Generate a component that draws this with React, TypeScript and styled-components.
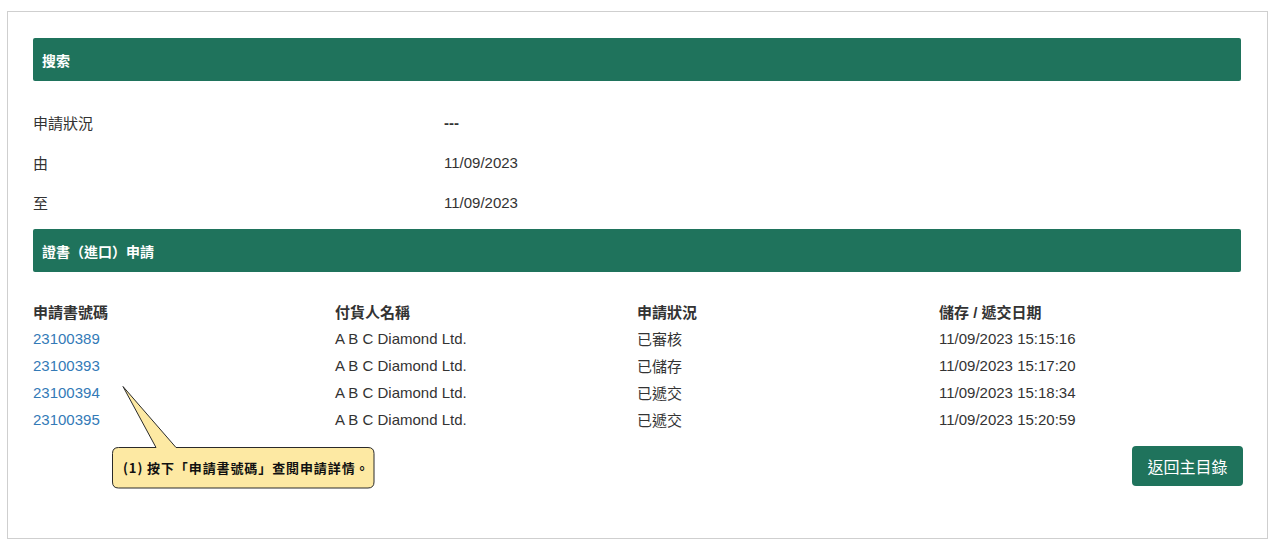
import styled, { createGlobalStyle } from "styled-components";

const GlobalStyle = createGlobalStyle`
  body {
    margin: 0;
    background: #ffffff;
    font-family: "Liberation Sans", Arial, "Noto Sans CJK TC", sans-serif;
    font-size: 15px;
    color: #333333;
  }
`;

const Frame = styled.div`
  position: relative;
  box-sizing: border-box;
  width: 1261px;
  margin: 11px 0 0 7px;
  padding: 26px 26px 50px 25px;
  border: 1px solid #cfcfcf;
  height: 528px;
`;

const SectionBar = styled.div`
  box-sizing: border-box;
  height: 43px;
  background: #1f735c;
  border-radius: 2px;
  color: #ffffff;
  font-weight: bold;
  font-size: 14px;
  display: flex;
  align-items: center;
  padding-left: 9px;
`;

const FormList = styled.div`
  display: flex;
  flex-direction: column;
  padding: 21px 0 7px;
`;

const FormRow = styled.div`
  display: grid;
  grid-template-columns: 411px 1fr;
  height: 40px;
  align-items: center;
`;

const Value = styled.div<{ $strong?: boolean }>`
  white-space: nowrap;
  font-weight: ${(p) => (p.$strong ? "bold" : "normal")};
`;

const Table = styled.div`
  display: flex;
  flex-direction: column;
  padding-top: 26px;
`;

const TableRow = styled.div<{ $head?: boolean }>`
  display: grid;
  grid-template-columns: repeat(4, 302px);
  height: 27px;
  align-items: center;
  font-weight: ${(p) => (p.$head ? "bold" : "normal")};
`;

const Cell = styled.div`
  white-space: nowrap;
`;

const AppLink = styled.a`
  color: #337ab7;
  text-decoration: none;
  cursor: pointer;
`;

const Footer = styled.div`
  display: flex;
  justify-content: flex-end;
  padding-top: 13px;
  margin-right: -2px;
`;

const Button = styled.button`
  height: 40px;
  width: 111px;
  border: none;
  border-radius: 4px;
  background: #1f735c;
  color: #ffffff;
  font-family: "Liberation Sans", Arial, "Noto Sans CJK TC", sans-serif;
  font-size: 16px;
  cursor: pointer;
`;

const Callout = styled.div`
  position: absolute;
  left: 104px;
  top: 374px;
  width: 263px;
  height: 103px;
`;

const CalloutText = styled.div`
  position: absolute;
  left: 0;
  right: 0;
  top: 61px;
  height: 41px;
  display: flex;
  align-items: center;
  padding-left: 11px;
  font-size: 13px;
  letter-spacing: 0.9px;
  font-weight: bold;
  color: #111111;
  font-family: "Noto Sans CJK TC", sans-serif;
  white-space: nowrap;
`;

const rows = [
  ["23100389", "A B C Diamond Ltd.", "已審核", "11/09/2023 15:15:16"],
  ["23100393", "A B C Diamond Ltd.", "已儲存", "11/09/2023 15:17:20"],
  ["23100394", "A B C Diamond Ltd.", "已遞交", "11/09/2023 15:18:34"],
  ["23100395", "A B C Diamond Ltd.", "已遞交", "11/09/2023 15:20:59"],
];

const fields = [
  ["申請狀況", "---"],
  ["由", "11/09/2023"],
  ["至", "11/09/2023"],
];

export default function App() {
  return (
    <>
      <GlobalStyle />
      <Frame>
        <SectionBar>搜索</SectionBar>
        <FormList>
          {fields.map(([label, value]) => (
            <FormRow key={label}>
              <Value>{label}</Value>
              <Value $strong={value === "---"}>{value}</Value>
            </FormRow>
          ))}
        </FormList>
        <SectionBar>證書（進口）申請</SectionBar>
        <Table>
          <TableRow $head>
            <Cell>申請書號碼</Cell>
            <Cell>付貨人名稱</Cell>
            <Cell>申請狀況</Cell>
            <Cell>儲存 / 遞交日期</Cell>
          </TableRow>
          {rows.map((r) => (
            <TableRow key={r[0]}>
              <Cell>
                <AppLink>{r[0]}</AppLink>
              </Cell>
              <Cell>{r[1]}</Cell>
              <Cell>{r[2]}</Cell>
              <Cell>{r[3]}</Cell>
            </TableRow>
          ))}
        </Table>
        <Footer>
          <Button>返回主目錄</Button>
        </Footer>
        <Callout>
          <svg width="263" height="103" viewBox="0 0 263 103">
            <path
              d="M 6.5 61.5 H 44 L 11 0.5 L 64 61.5 H 256 Q 262 61.5 262 67.5 V 96 Q 262 102 256 102 H 6.5 Q 0.5 102 0.5 96 V 67.5 Q 0.5 61.5 6.5 61.5 Z"
              fill="#fde9a3"
              stroke="#2a2a2a"
              strokeWidth="1"
            />
          </svg>
          <CalloutText>(1) 按下「申請書號碼」查閱申請詳情。</CalloutText>
        </Callout>
      </Frame>
    </>
  );
}
